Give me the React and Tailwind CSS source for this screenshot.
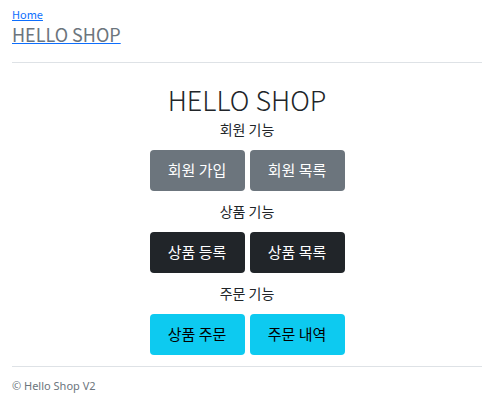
export default function App() {
  const sections = [
    {
      label: "회원 기능",
      btn: "bg-[#6c757d] text-white",
      items: ["회원 가입", "회원 목록"],
    },
    {
      label: "상품 기능",
      btn: "bg-[#212529] text-white",
      items: ["상품 등록", "상품 목록"],
    },
    {
      label: "주문 기능",
      btn: "bg-[#0dcaf0] text-black",
      items: ["상품 주문", "주문 내역"],
    },
  ];

  return (
    <div className="min-h-[419px] bg-white pl-3 pr-[21px] font-['Noto_Sans_CJK_KR','Noto_Sans',sans-serif] text-[#212529]">
      {/* Header */}
      <div className="pt-[7px]">
        <a href="#" className="block text-[11px] leading-[14px] text-[#0d6efd] underline">
          Home
        </a>
        <a
          href="#"
          className="mt-[1px] inline-block text-[18px] leading-[24px] text-[#6c757d] underline decoration-[#0d6efd]"
        >
          HELLO SHOP
        </a>
      </div>
      <hr className="mt-[15px] border-t border-[#dee2e6]" />

      {/* Main */}
      <div className="flex flex-col items-center pt-[19px]">
        <h1 className="text-[27px] font-light leading-[36px]">HELLO SHOP</h1>
        {sections.map((s, i) => (
          <div key={s.label} className="flex flex-col items-center">
            <p className={`text-[14px] leading-[22px] ${i === 0 ? "" : "mt-[9px]"}`}>{s.label}</p>
            <div className="mt-[10px] flex gap-[5px]">
              {s.items.map((item) => (
                <button
                  key={item}
                  className={`h-[41px] w-[95px] rounded-[4px] text-[15px] ${s.btn}`}
                >
                  {item}
                </button>
              ))}
            </div>
          </div>
        ))}
      </div>

      <hr className="mt-[11px] border-t border-[#dee2e6]" />
      <footer className="pt-[12px] font-['Noto_Sans',sans-serif] text-[11px] leading-[14px] text-[#6c757d]">
        © Hello Shop V2
      </footer>
    </div>
  );
}
